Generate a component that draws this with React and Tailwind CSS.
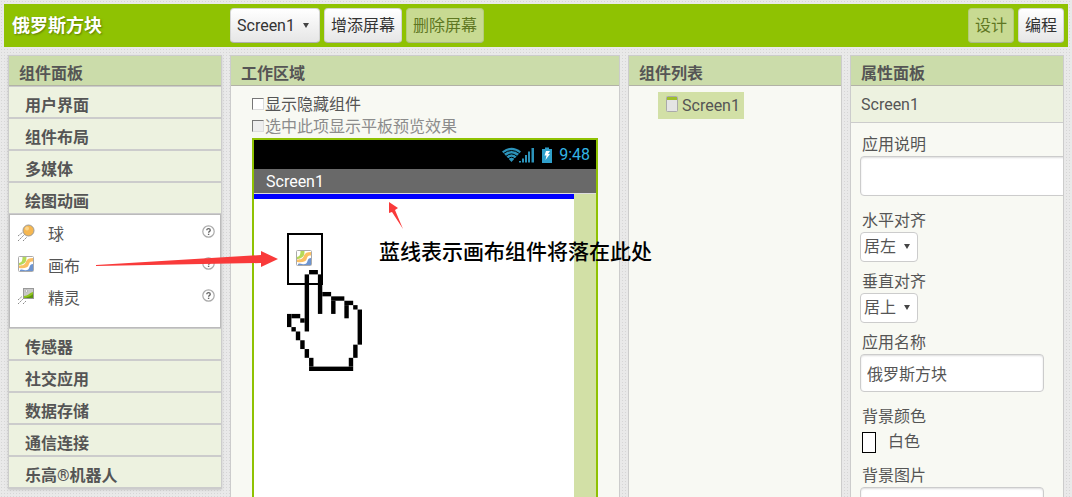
import { useState } from 'react';

const topGroups = ['用户界面', '组件布局', '多媒体', '绘图动画'];
const bottomGroups = ['传感器', '社交应用', '数据存储', '通信连接', '乐高®机器人'];

// row/column runs of the pixel hand, [x, y, width, height]
const handCells = [
  [5, 0, 2, 1], [4, 1, 1, 13], [7, 1, 1, 9], [8, 5, 2, 1], [10, 6, 3, 1], [10, 7, 1, 3],
  [13, 7, 2, 1], [13, 8, 1, 3], [15, 8, 1, 1], [16, 9, 1, 8], [15, 17, 1, 3], [14, 20, 1, 2],
  [5, 22, 10, 1], [5, 20, 1, 2], [4, 18, 1, 2], [3, 16, 1, 2], [2, 14, 1, 2], [1, 13, 1, 1],
  [0, 10, 1, 3], [1, 10, 2, 1], [3, 11, 1, 1],
];

function BallIcon() {
  return (
    <svg className="h-[18px] w-[18px]" viewBox="0 0 18 18">
      <path d="M0 12l5-4M0 17l7-7M5 17l4-4" stroke="#888" strokeDasharray="2 1" fill="none" />
      <circle cx="10.5" cy="6.5" r="5.5" fill="#f6b750" stroke="#999" />
      <circle cx="9" cy="4.5" r="2" fill="#fbd58d" />
    </svg>
  );
}

function CanvasIcon() {
  return (
    <svg className="h-[18px] w-[18px]" viewBox="0 0 18 18">
      <rect x="0.5" y="0.5" width="15" height="15" rx="1" fill="#fff" stroke="#aaa" />
      <path d="M4.500 1h4c0 4-1 6-3.500 7-1.500.8-2.500 1-4 1V7c3-.5 3.500-2.500 3.500-6z" fill="#b5d957" />
      <path d="M15 2v3.500c-3.500 0-3.500 1.500-4.500 4-1 2.500-4.500 3-9.500 2.500V9.500c4 0 6-.5 7-4C9 3 11 2 15 2z" fill="#fbbf62" />
      <path d="M15 8v7H2c-1-1.500 2-2 4-1 3 1 5-.5 5.500-3C12 9 13 8 15 8z" fill="#6d94d0" />
    </svg>
  );
}

function SpriteIcon() {
  return (
    <svg className="h-[18px] w-[18px]" viewBox="0 0 18 18">
      <path d="M0 12l4-3.500M0 16l5-5M5 16l3-3" stroke="#888" strokeDasharray="2 1" fill="none" />
      <rect x="5.5" y="0.5" width="10" height="10" fill="#c9c9c9" stroke="#999" />
      <path d="M6 8c4 0 5-3 9-4v6H6z" fill="#8fc31f" />
      <path d="M6 10c4-1 6-1 9-4v4z" fill="#5c9310" />
      <circle cx="8.5" cy="3" r="1.2" fill="#fff" stroke="#999" strokeWidth="0.6" />
    </svg>
  );
}

const drawingItems = [
  { name: '球', icon: BallIcon },
  { name: '画布', icon: CanvasIcon },
  { name: '精灵', icon: SpriteIcon },
];

function HelpIcon() {
  return (
    <svg className="h-[13px] w-[13px]" viewBox="0 0 13 13">
      <circle cx="6.5" cy="6.5" r="5.7" fill="#fff" stroke="#aaa" strokeWidth="1.2" />
      <path d="M4.8 5.2c0-2.2 3.5-2 3.5 0 0 1.2-1.7 1.2-1.7 2.5" stroke="#666" strokeWidth="1.3" fill="none" />
      <rect x="5.9" y="8.7" width="1.4" height="1.3" fill="#666" />
    </svg>
  );
}

function BarButton({ children, dim }) {
  return (
    <button
      disabled={dim}
      className={
        dim
          ? 'h-[35px] rounded-[4px] border border-[#b4cc7c] border-b-[#a9b98a] bg-[#c8da92] px-1.5 text-[#5f7722]'
          : 'h-[35px] rounded-[4px] border border-[#d4d4d4] border-b-[#b0b0b0] bg-linear-to-b from-white to-[#e6e6e6] px-1.5 text-[#333]'
      }
    >
      {children}
    </button>
  );
}

function Arrow({ className }) {
  return (
    <svg className={`pointer-events-none absolute h-[5px] w-[6px] ${className}`} viewBox="0 0 6 5">
      <path d="M0 0h6L3 5z" fill="#444" />
    </svg>
  );
}

function Panel({ title, className, children }) {
  return (
    <section className={`border border-[#ccc] ${className}`}>
      <h2 className="h-[30px] border-b border-[#b2b2a6] bg-[#cbdcaa] px-2.5 pt-[7px] font-bold leading-[22px]">{title}</h2>
      {children}
    </section>
  );
}

function GroupButton({ name }) {
  return (
    <button className="block h-8 w-full border-y border-[#ccc] bg-[#edf2e0] px-4 pt-2 text-left font-bold leading-[22px]">
      {name}
    </button>
  );
}

function AlignSelect({ id, label, options }) {
  return (
    <div className="mb-[7px]">
      <label htmlFor={id} className="block px-0.5 pt-0.5 leading-[22px]">{label}</label>
      <div className="relative w-[58px]">
        <select id={id} className="block h-[30px] w-full appearance-none rounded-[4px] border border-[#ccc] bg-white px-[3px]">
          {options.map((o) => <option key={o}>{o}</option>)}
        </select>
        <Arrow className="right-2 top-3" />
      </div>
    </div>
  );
}

function Phone() {
  return (
    <div className="relative mx-[21px] flex flex-1 flex-col border-2 border-b-0 border-[#8fc202] bg-white">
      <div className="flex h-[29px] shrink-0 items-center justify-end bg-black pr-1.5 pt-px text-[#33b5e5]">
        <svg className="mr-1.5 h-4 w-[51px]" viewBox="0 0 51 16">
          <path d="M0 4.500Q9.500 -3 19 4.500L9.500 15z" fill="#2c93ba" />
          <g fill="none" stroke="#000" strokeWidth="1">
            <path d="M1.500 6.500Q9.500 0.500 17.500 6.500" />
            <path d="M4 9.300Q9.500 4.500 15 9.300" />
            <path d="M6 12Q9.500 8.500 13 12" />
          </g>
          <path d="M17 15.500v-1.500h2v1.500zM20 15.500v-4h2v4zM23 15.500V8h2v7.500zM26 15.500V4.500h2v11zM29.500 15.500V1h2.500v14.500z" fill="#2c93ba" />
          <path d="M40 2h3V0.500h4V2h3v14H40z" fill="#2f9fca" />
          <path d="M44 4h4l-2 3h2l-4.500 6 1-4.500h-2z" fill="#fff" />
        </svg>
        <span>9:48</span>
      </div>
      <div className="h-[25px] shrink-0 border-b border-[#ddd] bg-[#696969] px-3 leading-[25px] text-white">Screen1</div>
      <div className="flex flex-1">
        <div className="flex-1 border-t-[5px] border-[#00f]" />
        <div className="w-[22px] bg-[#d2e0a6]" />
      </div>

      {/* component being dragged, with the pointer over it */}
      <div className="absolute left-[33px] top-[93px] flex h-[52px] w-9 items-center justify-center border-2 border-black">
        <CanvasIcon />
      </div>
      <svg className="absolute left-[33px] top-[130px] h-[101px] w-[75px]" viewBox="0 0 17 23" preserveAspectRatio="none">
        {handCells.map(([x, y, w, h]) => (
          <rect key={`${x}-${y}`} x={x} y={y} width={w} height={h} />
        ))}
      </svg>
      <svg className="absolute left-[134px] top-[62px] h-7 w-4" viewBox="0 0 16 28">
        <path d="M1 0l9 6-3 2 8 19L4 10l-3 1z" fill="#f93a3a" />
      </svg>
      <p className="absolute left-[125px] top-[97px] z-10 whitespace-nowrap text-[21px] font-medium leading-[30px] text-black">
        蓝线表示画布组件将落在此处
      </p>
    </div>
  );
}

export default function App() {
  const [showHidden, setShowHidden] = useState(false);
  const [appName, setAppName] = useState('俄罗斯方块');

  return (
    <div className="flex h-screen flex-col overflow-hidden bg-[#e9e9e9] bg-[radial-gradient(#d6d6d6_1px,transparent_1px)] bg-[size:3px_3px] px-1 pt-1 font-[Roboto,'Noto_Sans_CJK_SC',sans-serif] text-base leading-6 text-[#555]">
      <header className="flex h-[43px] shrink-0 items-center gap-1 bg-[#8fc202] px-1">
        <h1 className="w-[218px] pl-1 text-lg font-bold text-white [text-shadow:1px_1px_2px_#5d7d06]">俄罗斯方块</h1>
        <div className="relative">
          <select aria-label="Screen" className="block h-[35px] w-[90px] appearance-none rounded-[4px] border border-[#d4d4d4] border-b-[#b0b0b0] bg-linear-to-b from-white to-[#e6e6e6] px-1.5 text-[#333]">
            <option>Screen1</option>
          </select>
          <Arrow className="right-[11px] top-[15px]" />
        </div>
        <BarButton>增添屏幕</BarButton>
        <BarButton dim>删除屏幕</BarButton>
        <div className="ml-auto flex gap-1">
          <BarButton dim>设计</BarButton>
          <BarButton>编程</BarButton>
        </div>
      </header>

      <main className="mt-2 flex min-h-0 flex-1 gap-2 px-1">
        <Panel title="组件面板" className="w-[214px] shrink-0 self-start shadow-sm">
          {topGroups.map((name) => <GroupButton key={name} name={name} />)}
          <ul className="h-[114px] border border-[#bbb] bg-white pl-2 pr-[5px] pt-0.5">
            {drawingItems.map(({ name, icon: Icon }) => (
              <li key={name} className="flex h-8 items-start">
                <div className="pt-[7px]"><Icon /></div>
                <span className="ml-3 flex-1 pt-1.5">{name}</span>
                <button aria-label="?" className="pt-2"><HelpIcon /></button>
              </li>
            ))}
          </ul>
          {bottomGroups.map((name) => <GroupButton key={name} name={name} />)}
        </Panel>

        <Panel title="工作区域" className="flex min-w-0 flex-1 flex-col border-b-0 bg-[#f8f9f3]">
          <div className="px-[21px] pt-2 leading-[22px]">
            <label className="flex">
              <input
                type="checkbox"
                checked={showHidden}
                onChange={(e) => setShowHidden(e.target.checked)}
                className="mr-px mt-1 h-3 w-3 appearance-none border border-b-[#ddd] border-l-[#777] border-r-[#ddd] border-t-[#777] bg-white checked:bg-[#555]"
              />
              显示隐藏组件
            </label>
            <label className="flex text-[#8c8c8c]">
              <input
                type="checkbox"
                disabled
                className="mr-px mt-1 h-3 w-3 appearance-none border border-b-[#ddd] border-l-[#777] border-r-[#ddd] border-t-[#777] bg-[#eee]"
              />
              选中此项显示平板预览效果
            </label>
          </div>
          <Phone />
        </Panel>

        <Panel title="组件列表" className="w-[214px] shrink-0 border-b-0 bg-[#f8f9f3]">
          <button className="ml-[29px] mt-1.5 flex h-[27px] items-center gap-1 bg-[#d2e0a6] pl-2 pr-1">
            <svg className="mb-1 h-4 w-3" viewBox="0 0 12 16">
              <rect x="0.5" y="0.5" width="11" height="15" rx="1" fill="#e4e4e4" stroke="#aaa" />
              <rect x="1" y="1" width="10" height="3" fill="#9dbf2b" />
            </svg>
            Screen1
          </button>
        </Panel>

        <Panel title="属性面板" className="w-[214px] shrink-0 overflow-hidden border-b-0 bg-[#f8f9f3]">
          <div className="h-[37px] border-b border-[#ccc] bg-[#edf2e0] px-2.5 pt-[7px]">Screen1</div>
          <div className="pl-[9px] pt-[9px]">
            <div className="mb-3">
              <label htmlFor="about" className="block px-0.5 pt-0.5 leading-[22px]">应用说明</label>
              <textarea id="about" className="block h-10 w-[220px] resize-none rounded-[4px] border border-[#ccc] bg-white p-1.5 shadow-[inset_0_1px_2px_#ddd]" />
            </div>
            <AlignSelect id="halign" label="水平对齐" options={['居左', '居中', '居右']} />
            <AlignSelect id="valign" label="垂直对齐" options={['居上', '居中', '居下']} />
            <div className="mb-3">
              <label htmlFor="appname" className="block px-0.5 pt-0.5 leading-[22px]">应用名称</label>
              <input
                id="appname"
                value={appName}
                onChange={(e) => setAppName(e.target.value)}
                className="block h-[38px] w-[184px] rounded-[4px] border border-[#ccc] bg-white px-1.5 shadow-[inset_0_1px_2px_#ddd]"
              />
            </div>
            <div className="mb-[7px]">
              <div className="px-0.5 pt-0.5 leading-[22px]">背景颜色</div>
              <button className="flex h-7 items-center gap-3 pl-0.5">
                <span className="h-[21px] w-3.5 border border-black bg-white" />
                白色
              </button>
            </div>
            <label htmlFor="bgimage" className="block px-0.5 pt-0.5 leading-[22px]">背景图片</label>
            <input
              id="bgimage"
              defaultValue="无"
              className="block h-[38px] w-[184px] rounded-[4px] border border-[#ccc] bg-white px-1.5 shadow-[inset_0_1px_2px_#ddd]"
            />
          </div>
        </Panel>
      </main>

      {/* drag arrow from the palette to the viewer */}
      <svg className="pointer-events-none absolute left-24 top-[250px] h-5 w-[182px]" viewBox="0 0 182 20">
        <path d="M0 15L165 5V1l17 8-17 8v-4L0 16z" fill="#f93a3a" />
      </svg>
    </div>
  );
}
